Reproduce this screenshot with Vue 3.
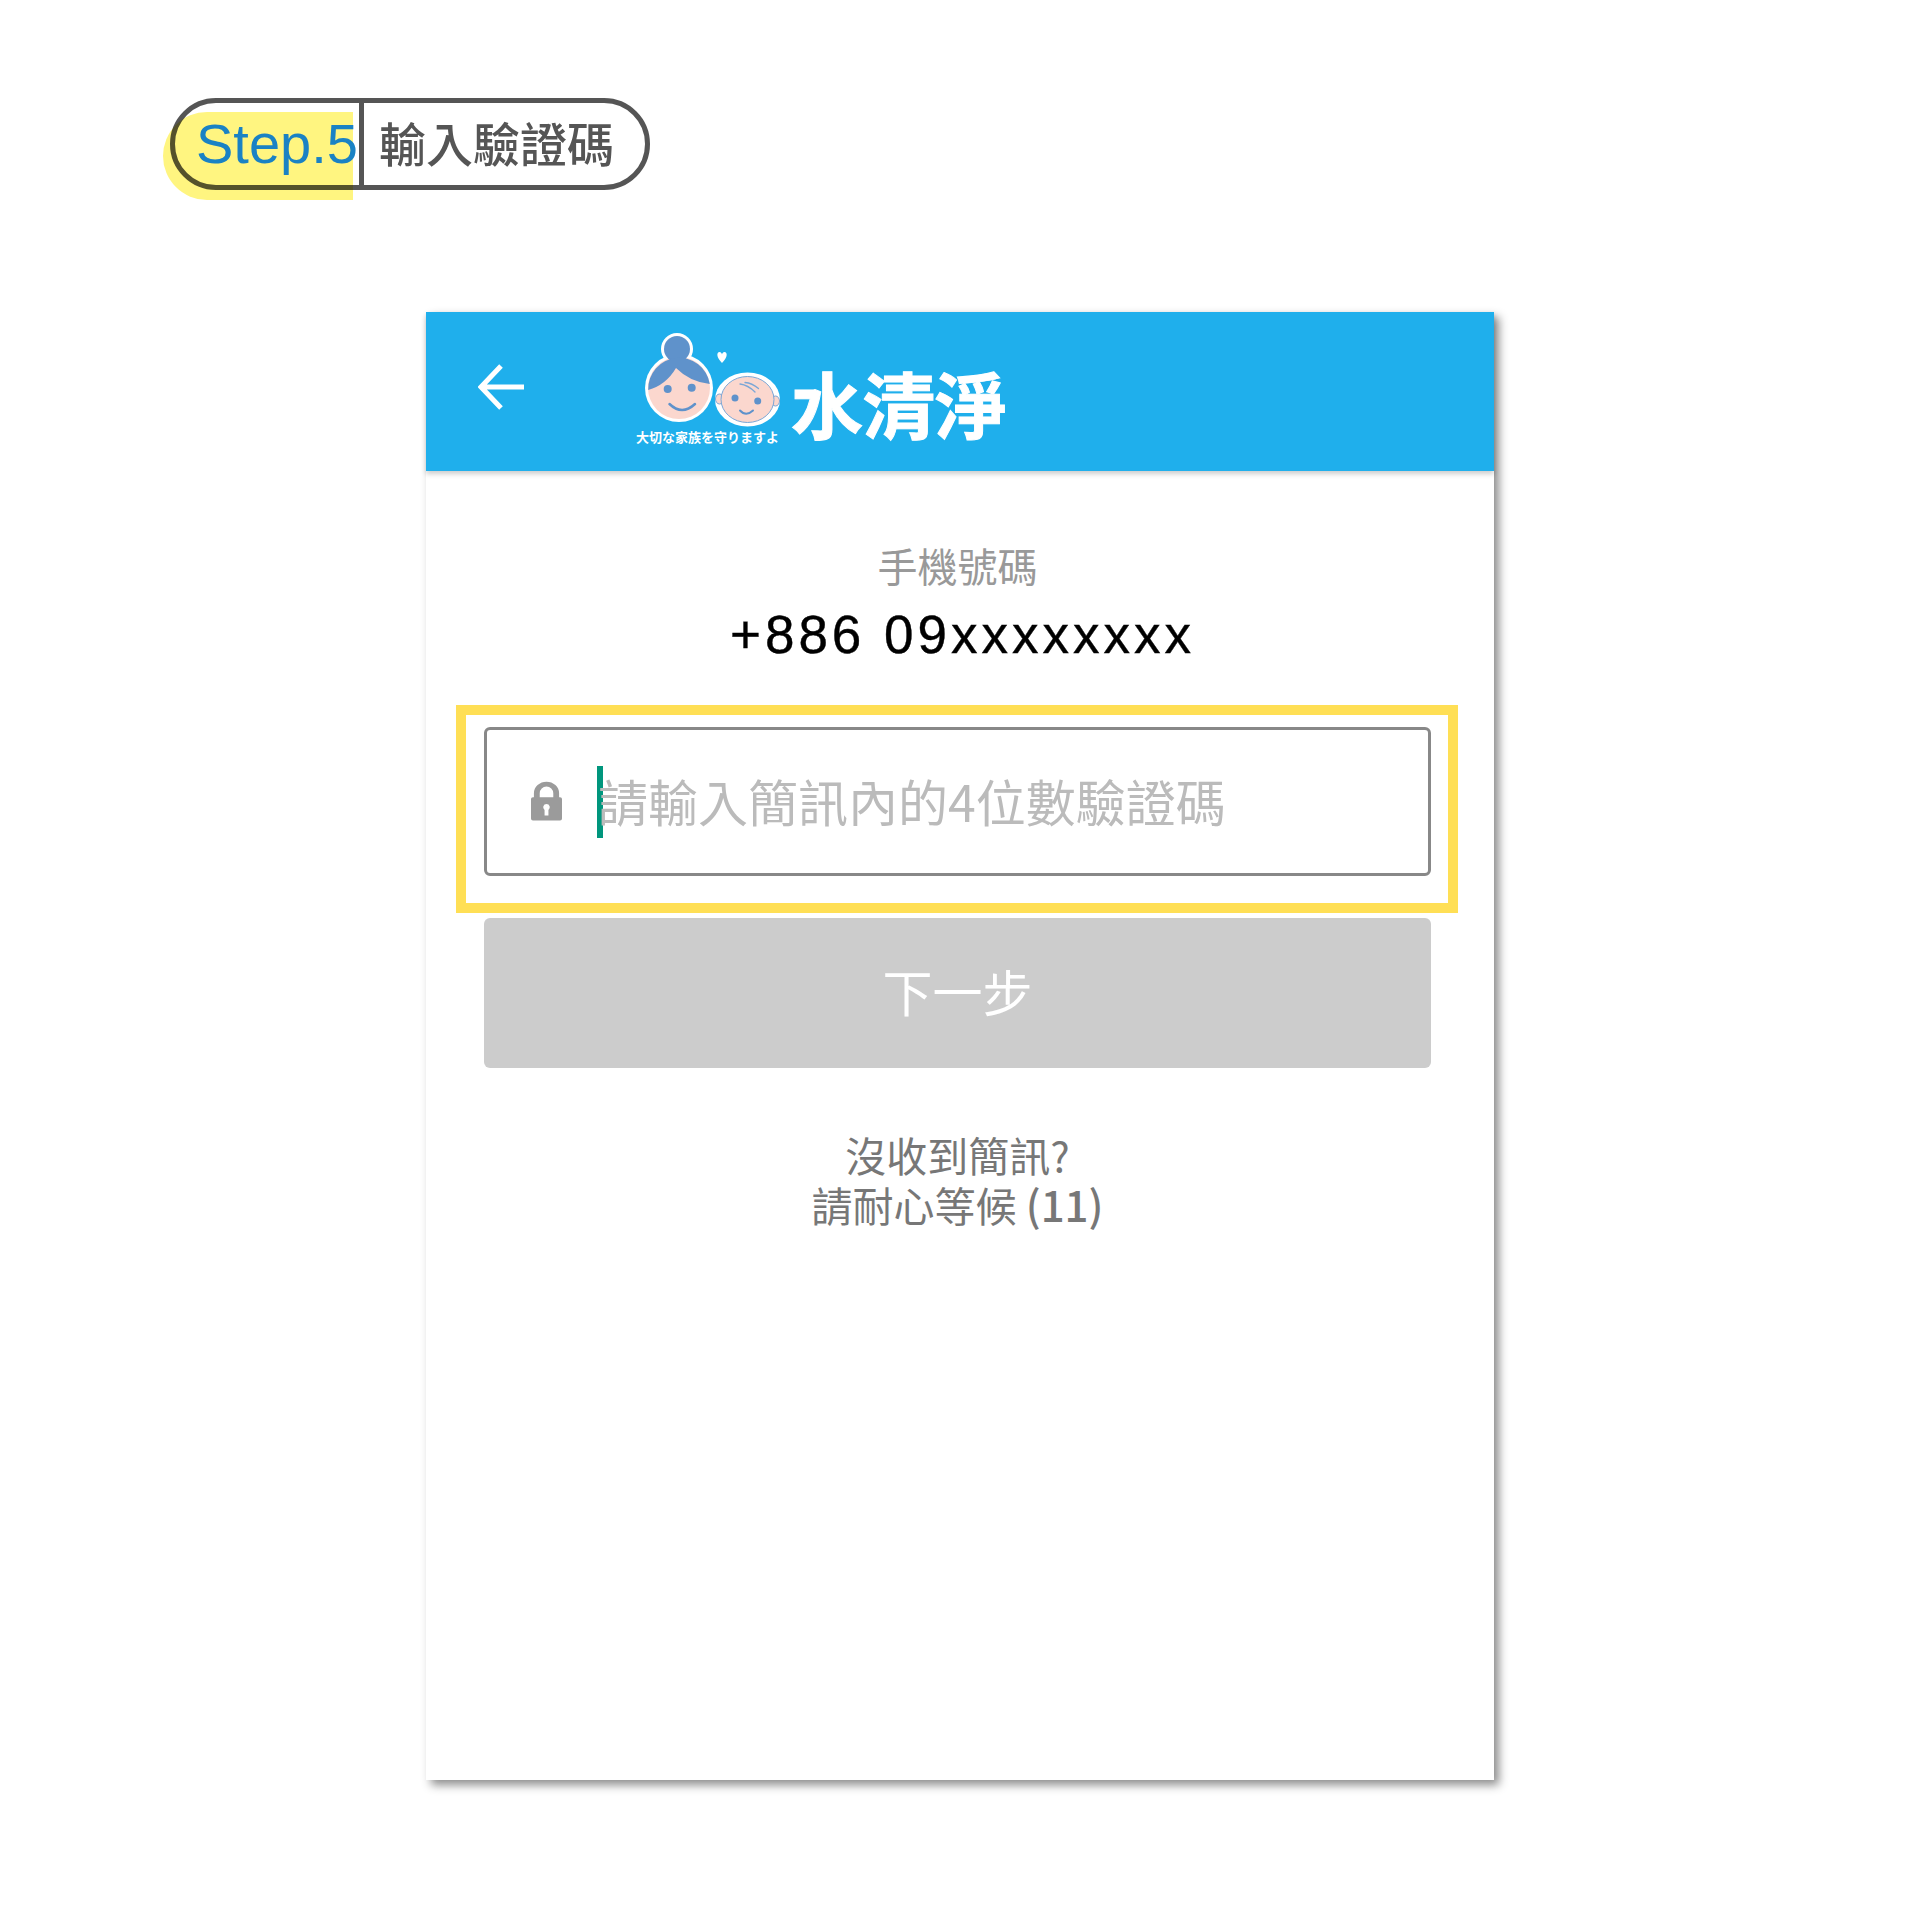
<template>
  <div class="page">
    <div class="step">
      <span class="marker"></span>
      <span class="step_no">Step.5</span>
      <span class="step_name">輸入驗證碼</span>
    </div>

    <div class="phone">
      <header class="bar">
        <svg class="back" viewBox="0 0 47 46" width="47" height="46">
          <path d="M46 23H4M23 2 3 23l20 21" fill="none" stroke="#fff" stroke-width="5" />
        </svg>
        <div class="logo">
          <svg class="faces" viewBox="0 0 140 98" width="140" height="98">
            <circle cx="35" cy="19" r="16" fill="#fff" />
            <ellipse cx="37" cy="58" rx="34" ry="34" fill="#fff" />
            <ellipse cx="37" cy="58" rx="31" ry="31" fill="#fbd7ce" />
            <circle cx="35" cy="19" r="13" fill="#5f92cb" />
            <path d="M6.2 60A31 31 0 0 1 67.8 54Q48 52 34 38 24 55 6.2 60Z" fill="#5f92cb" />
            <circle cx="25.7" cy="59" r="4" fill="#5f92cb" />
            <circle cx="49.7" cy="57.7" r="4" fill="#5f92cb" />
            <path d="M27.5 74Q40 86 53 74" fill="none" stroke="#5f92cb" stroke-width="2.5" stroke-linecap="round" />

            <ellipse cx="105.500" cy="69.500" rx="32.500" ry="27" fill="#fff" />
            <ellipse cx="77.500" cy="69" rx="4" ry="5" fill="#fbd7ce" stroke="#7ba6d6" stroke-width="1" />
            <ellipse cx="133.500" cy="71" rx="4" ry="5" fill="#fbd7ce" stroke="#7ba6d6" stroke-width="1" />
            <ellipse cx="105.500" cy="69.500" rx="26.500" ry="23" fill="#fbd7ce" stroke="#7ba6d6" stroke-width="1" />
            <circle cx="93" cy="68" r="3.500" fill="#5f92cb" />
            <circle cx="115.700" cy="71" r="3.500" fill="#5f92cb" />
            <path d="M98 80.500Q104 87 111 80.500" fill="none" stroke="#5f92cb" stroke-width="2" stroke-linecap="round" />
            <path d="M98 54Q106 55 113 62M103 52.500Q110 53 116.500 58.500" fill="none" stroke="#7ba6d6" stroke-width="1.300" stroke-linecap="round" />

            <path d="M80 33C74 27 74.500 22 77.500 22 79 22 80 23.500 80 24.500 80 23.500 81 22 82.500 22 85.500 22 86 27 80 33Z" fill="#fff" />
          </svg>
          <div class="tagline">大切な家族を守りますよ</div>
        </div>
        <div class="brand">水清淨</div>
      </header>

      <main class="body">
        <div class="label">手機號碼</div>
        <div class="number">+886 09xxxxxxxx</div>

        <div class="field">
          <span class="highlight"></span>
          <svg class="lock" viewBox="0 0 32 40" width="31" height="40">
            <path fill-rule="evenodd" d="M3 16V12A13 12 0 0 1 29 12V16H30A2 2 0 0 1 32 18V38A2 2 0 0 1 30 40H2A2 2 0 0 1 0 38V18A2 2 0 0 1 2 16ZM9 16H23V12A7 7 0 0 0 9 12ZM16 23A3.500 3.500 0 0 0 14 29.300V35H18V29.300A3.500 3.500 0 0 0 16 23Z" fill="#9b9b9b" />
          </svg>
          <span class="caret"></span>
          <span class="placeholder">請輸入簡訊內的4位數驗證碼</span>
        </div>

        <button class="next">下一步</button>

        <p class="wait">沒收到簡訊?<br />請耐心等候 <span class="count">(11)</span></p>
      </main>
    </div>
  </div>
</template>

<script setup>
</script>

<style>
html,
body {
  margin: 0;
}
</style>

<style scoped>
.page {
  height: 1930px;
  padding: 98px 0 0 170px;
  box-sizing: border-box;
  font-family: "Noto Sans CJK TC", "Liberation Sans", sans-serif;
}

.step {
  position: relative;
  isolation: isolate;
  display: flex;
  width: 480px;
  height: 92px;
  box-sizing: border-box;
  border: 5px solid #555;
  border-radius: 46px;
}

/* multiply keeps the pill's border visible through the yellow */
.marker {
  position: absolute;
  left: -12px;
  top: 9px;
  width: 190px;
  height: 88px;
  background: #fff580;
  border-radius: 44px 0 0 44px;
  mix-blend-mode: multiply;
  z-index: -1;
}

.step_no {
  width: 189px;
  padding-left: 21px;
  box-sizing: border-box;
  border-right: 5px solid #555;
  font: 56px/82px "Liberation Sans", sans-serif;
  color: #1a82c4;
  white-space: nowrap;
}

.step_name {
  margin-left: 15px;
  font-size: 47px;
  font-weight: 500;
  line-height: 77px;
  color: #555;
}

.phone {
  width: 1068px;
  height: 1468px;
  margin: 122px 0 0 256px;
  background: #fff;
  box-shadow: 5px 5px 9px rgba(0, 0, 0, 0.45);
}

.bar {
  display: flex;
  align-items: flex-start;
  height: 159px;
  padding-left: 52px;
  box-sizing: border-box;
  background: #1fafec;
  box-shadow: 0 3px 5px rgba(0, 0, 0, 0.2);
}

.back {
  margin-top: 52px;
  flex: none;
}

.logo {
  width: 144px;
  margin: 18px 0 0 111px;
  flex: none;
}

.faces {
  display: block;
  margin-left: 6px;
}

.tagline {
  font-family: "Noto Sans CJK JP", sans-serif;
  font-size: 13px;
  font-weight: 700;
  line-height: 18px;
  color: #fff;
  white-space: nowrap;
}

.brand {
  margin: 40px 0 0 11px;
  font-size: 72px;
  font-weight: 700;
  line-height: 100px;
  color: #fff;
  white-space: nowrap;
  -webkit-text-stroke: 1px #fff;
}

.body {
  display: flex;
  flex-direction: column;
  align-items: center;
  padding: 65px 63px 0 58px;
}

.label {
  font-size: 40px;
  line-height: 58px;
  color: #999;
}

.number {
  margin-top: 11px;
  padding-left: 10px;
  font: 53px/60px "Liberation Sans", sans-serif;
  letter-spacing: 4px;
  color: #000;
  -webkit-text-stroke: 0.4px #000;
}

.field {
  position: relative;
  display: flex;
  align-items: center;
  align-self: stretch;
  height: 149px;
  margin-top: 62px;
  padding-left: 44px;
  box-sizing: border-box;
  border: 3px solid #888;
  border-radius: 6px;
}

.highlight {
  position: absolute;
  inset: -25px -30px -40px -31px;
  border: 10px solid #ffdf55;
  pointer-events: none;
}

.lock {
  flex: none;
  margin-bottom: 2px;
}

.caret {
  width: 6px;
  height: 72px;
  margin-left: 35px;
  background: #00967d;
  flex: none;
}

.placeholder {
  margin: 0 0 3px -5px;
  font-size: 50px;
  line-height: 72px;
  color: #bbb;
  white-space: nowrap;
}

.next {
  align-self: stretch;
  height: 150px;
  margin-top: 42px;
  padding: 0 0 6px;
  border: 0;
  border-radius: 6px;
  background: #ccc;
  font-family: inherit;
  font-size: 50px;
  font-weight: 400;
  color: #fff;
}

.wait {
  margin: 61px 0 0;
  font-size: 41px;
  line-height: 50px;
  text-align: center;
  color: #777;
}

.count {
  font-size: 42px;
  font-weight: 500;
  line-height: 1;
}
</style>
